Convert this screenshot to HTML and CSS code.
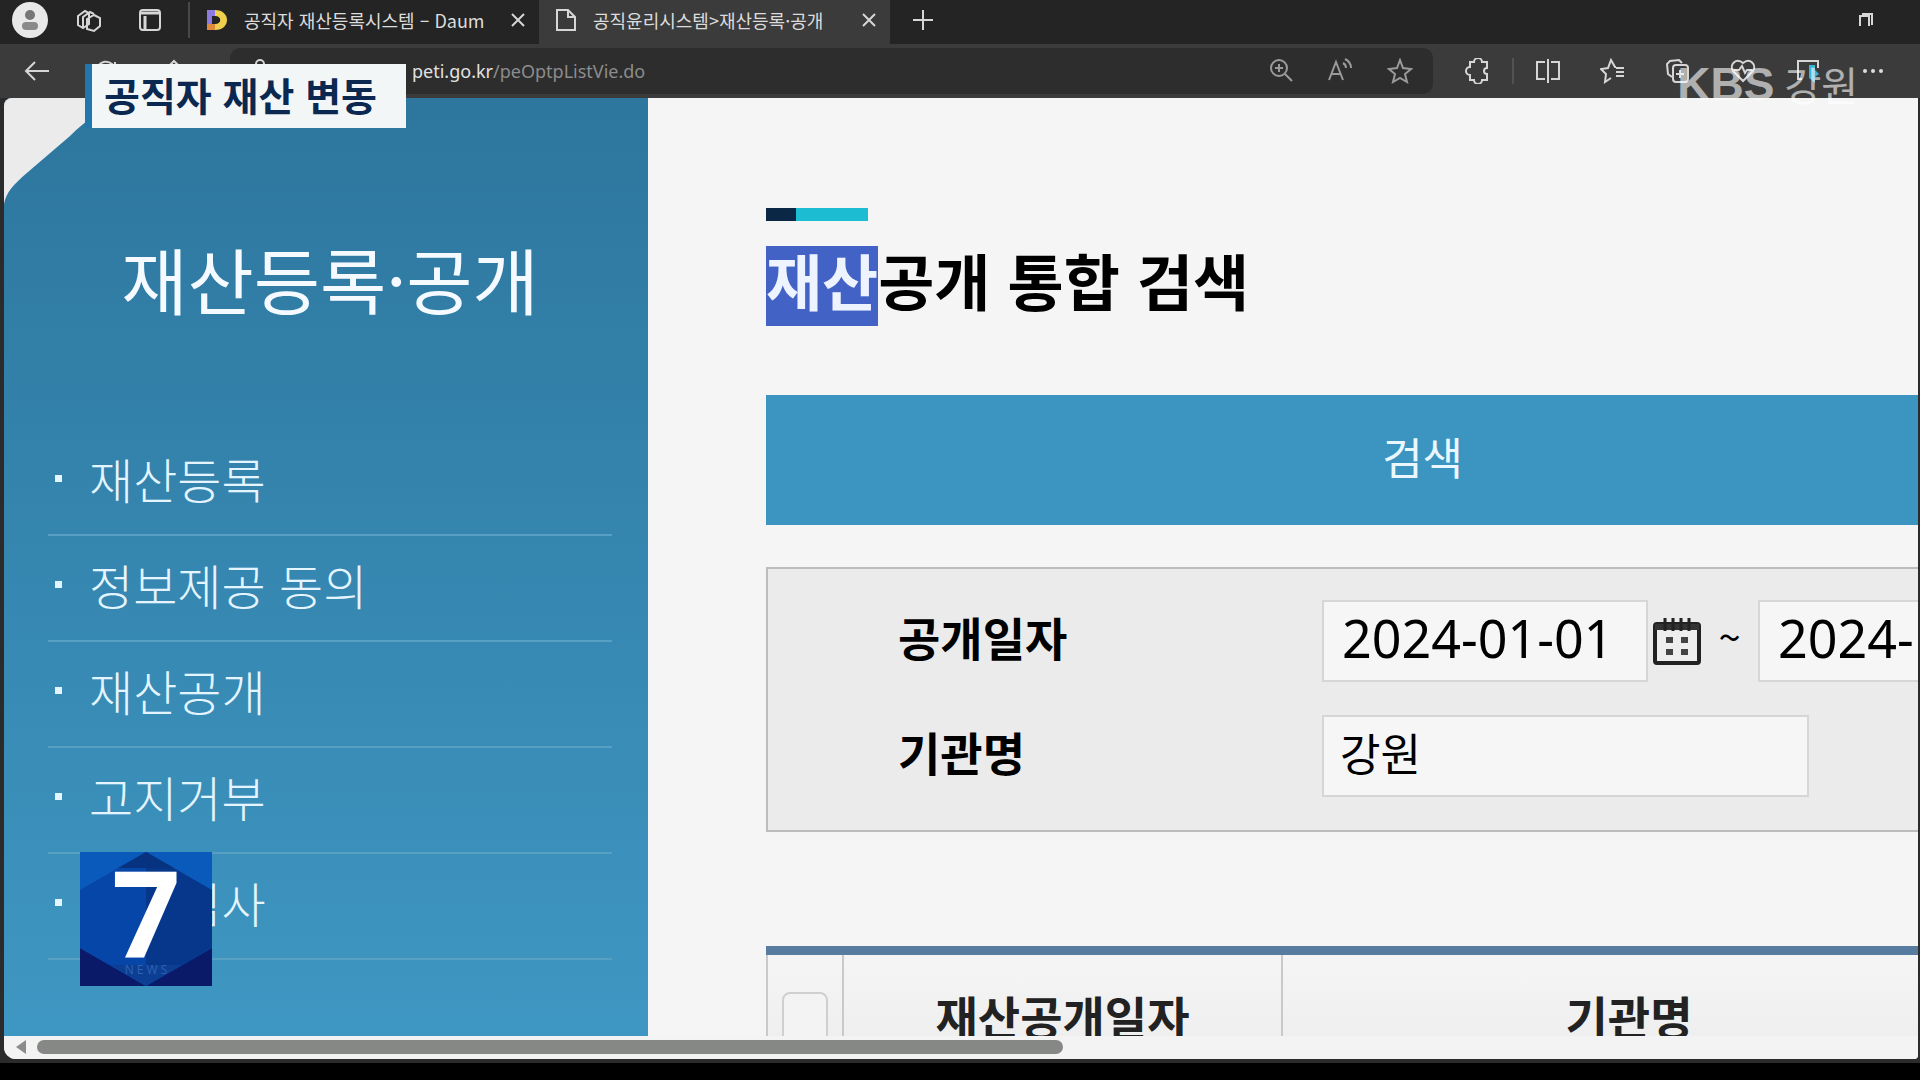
FILE: index.html
```html
<!DOCTYPE html>
<html lang="ko">
<head>
<meta charset="utf-8">
<title>재산공개 통합 검색</title>
<link rel="stylesheet" href="styles.css">
</head>
<body>
<div class="browser">
  <header class="tabs">
    <div class="tab-tools">
      <button class="icon-btn avatar" aria-label="프로필"><svg width="36" height="36" viewBox="0 0 36 36"><circle cx="18" cy="18" r="18" fill="#e9e9e9"/><circle cx="18" cy="13" r="5" fill="#777"/><rect x="10" y="20" width="16" height="8" rx="4" fill="#8a8a8a"/></svg></button>
      <button class="icon-btn" aria-label="작업 영역"><svg width="26" height="26" viewBox="0 0 26 26" class="line"><path d="M2 9l7-5 4 2v11l-6 4-5-3z M7 21V10l7-5 4 2 M11 22V12l7-4 6 3v8l-6 5z"/></svg></button>
      <button class="icon-btn" aria-label="탭 작업"><svg width="24" height="24" viewBox="0 0 24 24" class="line"><rect x="2" y="2" width="20" height="20" rx="3"/><path d="M2 5h20M7 8v14" stroke-width="3"/></svg></button>
    </div>
    <div class="tab">
      <svg width="22" height="22" viewBox="0 0 22 22"><path d="M1 1h8v20H1z" fill="#8d7be0"/><path d="M9 1c16 0 16 20 0 20v-6c7 0 7-8 0-8z" fill="#f0cf4d"/><path d="M1 15h8v6H1z" fill="#e08a3c"/><path d="M6 7h3v8H6z" fill="#242424"/></svg>
      <span class="tab-title">공직자 재산등록시스템 – Daum</span>
      <button class="icon-btn" aria-label="탭 닫기"><svg width="14" height="14" viewBox="0 0 14 14" class="line"><path d="M1 1l12 12M13 1L1 13"/></svg></button>
    </div>
    <div class="tab active">
      <svg width="22" height="24" viewBox="0 0 22 24" class="line"><path d="M2 2h11l7 7v13H2zM13 2v7h7"/></svg>
      <span class="tab-title">공직윤리시스템&gt;재산등록·공개</span>
      <button class="icon-btn" aria-label="탭 닫기"><svg width="14" height="14" viewBox="0 0 14 14" class="line"><path d="M1 1l12 12M13 1L1 13"/></svg></button>
    </div>
    <button class="icon-btn new-tab" aria-label="새 탭"><svg width="22" height="22" viewBox="0 0 22 22" class="line"><path d="M11 1v20M1 11h20"/></svg></button>
    <button class="icon-btn restore" aria-label="이전 크기로 복원"><svg width="16" height="18" viewBox="0 0 16 18" class="line"><path d="M2 15V5h9v10"/><path d="M4 3h10v11"/></svg></button>
  </header>

  <div class="toolbar">
    <button class="icon-btn back" aria-label="뒤로"><svg width="26" height="22" viewBox="0 0 26 22" class="line"><path d="M25 11H2M11 2l-9 9 9 9"/></svg></button>
    <button class="icon-btn" aria-label="새로 고침"><svg width="24" height="24" viewBox="0 0 24 24" class="line"><path d="M21 12a9 9 0 1 1-3-7l3 3V3"/></svg></button>
    <button class="icon-btn" aria-label="홈"><svg width="24" height="24" viewBox="0 0 24 24" class="line"><path d="M3 11l9-9 9 9v11h-6v-7H9v7H3z"/></svg></button>
    <div class="address">
      <svg width="20" height="24" viewBox="0 0 20 24" class="line"><rect x="2" y="9" width="16" height="13" rx="2"/><path d="M6 9V5a4 4 0 0 1 8 0v4"/></svg>
      <span class="url"><b>peti.go.kr</b>/peOptpListVie.do</span>
      <div class="address-actions">
        <button class="icon-btn" aria-label="확대"><svg width="24" height="24" viewBox="0 0 24 24" class="line"><circle cx="10" cy="10" r="8"/><path d="M16 16l7 7M6 10h8M10 6v8"/></svg></button>
        <button class="icon-btn" aria-label="소리내어 읽기"><svg width="26" height="24" viewBox="0 0 26 24" class="line"><path d="M2 22L9 4l7 18M4 16h10M16 5c2 1 3 3 3 5M18 1c4 2 6 5 6 9"/></svg></button>
        <button class="icon-btn" aria-label="즐겨찾기 추가"><svg width="26" height="26" viewBox="0 0 26 26" class="line"><path d="M13 2l3 8 8 1-6 5 2 8-7-4-7 4 2-8-6-5 8-1z"/></svg></button>
      </div>
    </div>
    <div class="extras">
      <button class="icon-btn" aria-label="확장"><svg width="26" height="26" viewBox="0 0 26 26" class="line"><path d="M9 4a4 4 0 0 1 8 0h5v6a3 3 0 0 0 0 6v6h-5a4 4 0 0 1-8 0H5v-5a4 4 0 0 1 0-8V4z"/></svg></button>
      <span class="divider"></span>
      <button class="icon-btn" aria-label="화면 분할"><svg width="26" height="26" viewBox="0 0 26 26" class="line"><path d="M10 4H2v17h8M16 4h8v17h-8M13 1v24"/></svg></button>
      <button class="icon-btn" aria-label="즐겨찾기"><svg width="26" height="26" viewBox="0 0 26 26" class="line"><path d="M16 9l-1 0-4-7-3 8-7 1 5 5-1 8 6-4M16 10h8M16 14h8M16 18h8"/></svg></button>
      <button class="icon-btn" aria-label="컬렉션"><svg width="26" height="26" viewBox="0 0 26 26" class="line"><path d="M7 19l-4-3-1-10 3-3 9-1 3 3"/><rect x="8" y="7" width="15" height="17" rx="3"/><path d="M15 12v8M11 16h8"/></svg></button>
      <button class="icon-btn" aria-label="브라우저 성능"><svg width="26" height="26" viewBox="0 0 26 26" class="line"><path d="M13 23L3 13C-1 7 6-1 13 5c7-6 14 2 10 8zM4 12h5l3-4 3 7 2-3h5"/></svg></button>
      <button class="icon-btn" aria-label="캡처"><svg width="26" height="26" viewBox="0 0 26 26" class="line"><path d="M7 21H3V3h20v7"/><path d="M14 7h6v5l4 4-4 3v6l-6-5z" fill="#36b5d8" stroke="none"/></svg></button>
      <button class="icon-btn" aria-label="설정 및 기타"><svg width="26" height="26" viewBox="0 0 26 26" fill="#ddd"><circle cx="5" cy="13" r="2"/><circle cx="13" cy="13" r="2"/><circle cx="21" cy="13" r="2"/></svg></button>
    </div>
  </div>

  <div class="page">
    <div class="content">
      <aside class="sidebar">
        <svg class="corner" width="122" height="106" viewBox="0 0 122 106" aria-hidden="true"><path d="M0 0h122C102 8 82 22 66 38L24 74C10 86 2 94 0 106z" fill="#ebebeb"/></svg>
        <h2 class="side-title">재산등록·공개</h2>
        <nav>
          <ul class="menu">
            <li><a href="#">재산등록</a></li>
            <li><a href="#">정보제공 동의</a></li>
            <li><a href="#">재산공개</a></li>
            <li><a href="#">고지거부</a></li>
            <li><a href="#">재산심사</a></li>
          </ul>
        </nav>
      </aside>
      <main class="main">
        <div class="sheet">
          <div class="accent"></div>
          <h1 class="title"><mark>재산</mark>공개 통합 검색</h1>
          <button class="search">검색</button>
          <form class="panel">
            <label for="from">공개일자</label>
            <div class="range">
              <input id="from" class="date" type="text" value="2024-01-01">
              <button type="button" class="calendar" aria-label="달력"><svg width="48" height="50" viewBox="0 0 48 50"><rect x="2" y="8" width="44" height="39" rx="2" fill="#eee" stroke="#222" stroke-width="4"/><path d="M2 8h44v6H2z" fill="#333"/><path d="M12 2v13M20 2v13M28 2v13M36 2v13" stroke="#222" stroke-width="3"/><path d="M13 21h7v6h-7zM28 21h7v6h-7zM13 33h7v6h-7zM28 33h7v6h-7z" fill="#444"/></svg></button>
              <span class="tilde">~</span>
              <input class="date" type="text" value="2024-" aria-label="종료일">
            </div>
            <label for="org">기관명</label>
            <input id="org" class="org" type="text" value="강원">
          </form>
          <table class="results">
            <thead>
              <tr>
                <th class="pick"><input type="checkbox" aria-label="전체 선택"></th>
                <th class="day">재산공개일자</th>
                <th class="agency">기관명</th>
                <th></th>
              </tr>
            </thead>
          </table>
        </div>
      </main>
    </div>
    <div class="scrollbar">
      <svg width="12" height="16" viewBox="0 0 12 16"><path d="M11 1v14L1 8z" fill="#8b8b8b"/></svg>
      <div class="thumb"></div>
    </div>
  </div>
</div>

<div class="caption">공직자 재산 변동</div>
<div class="station"><b>KBS</b><span>강원</span></div>
<div class="program">
  <svg width="132" height="134" viewBox="0 0 132 134" aria-hidden="true"><path d="M0 0h132v134H0z" fill="#0a5abb"/><path d="M0 96l66 38 66-38v38H0z" fill="#0a1a68"/><path d="M66 0L0 38v58l66 38z" fill="#0646a8"/><path d="M66 0l66 38v58l-66 38z" fill="#06378a"/><path d="M66 0L38 16h56z" fill="#07327f"/><path d="M30 113h72l-36 21z" fill="#0c3f94"/></svg>
  <span class="seven">7</span>
  <span class="news">N E W S</span>
</div>
</body>
</html>
```
FILE: styles.css
```css
* { box-sizing: border-box; }

body {
  margin: 0;
  height: 100vh;
  overflow: hidden;
  background: #000;
  font-family: "Noto Sans CJK KR", sans-serif;
}

button {
  border: 0;
  padding: 0;
  background: none;
  font-family: inherit;
}

.browser {
  height: 100%;
  display: flex;
  flex-direction: column;
  border-bottom: 17px solid #000;
  background: #2b2b2b;
}

.icon-btn { display: flex; flex: none; }

.line {
  fill: none;
  stroke: #d6d6d6;
  stroke-width: 2;
}

/* tab strip */
.tabs {
  height: 44px;
  flex: none;
  display: flex;
  align-items: center;
  padding: 0 46px 4px 12px;
  background: #242424;
}

.tab-tools {
  display: flex;
  align-items: center;
  gap: 28px;
  padding-right: 26px;
  border-right: 2px solid #484848;
}

.tab-tools .icon-btn:last-child { margin-left: 8px; }

.tab {
  width: 349px;
  height: 44px;
  display: flex;
  align-items: center;
  gap: 16px;
  padding: 0 14px 4px 16px;
  margin-bottom: -4px;
}

.tab.active {
  width: 351px;
  background: #3b3b3b;
}

.tab svg { flex: none; }

.tab-title {
  flex: 1;
  overflow: hidden;
  white-space: nowrap;
  font-size: 18px;
  line-height: 32px;
  color: #dcdcdc;
}

.new-tab { margin-left: 22px; }
.restore { margin-left: auto; }

/* toolbar */
.toolbar {
  height: 54px;
  flex: none;
  display: flex;
  align-items: center;
  gap: 44px;
  padding: 0 34px 0 24px;
  background: #3b3b3b;
}

.address {
  flex: 1;
  height: 46px;
  display: flex;
  align-items: center;
  padding: 0 20px 0 20px;
  border-radius: 10px;
  background: #2d2d2d;
}

.url {
  flex: 1;
  padding-left: 142px;
  font-family: "Noto Sans", sans-serif;
  font-size: 18px;
  color: #8c8c8c;
}

.url b { font-weight: 400; color: #e2e2e2; }

.address-actions { display: flex; gap: 34px; }
.address-actions .line { stroke: #9a9a9a; }

.extras {
  display: flex;
  align-items: center;
  gap: 39px;
  margin-left: -12px;
}

.divider {
  width: 2px;
  height: 26px;
  margin: 0 -18px;
  background: #525252;
}

/* page viewport */
.page {
  flex: 1;
  min-height: 0;
  display: flex;
  flex-direction: column;
  margin: 0 2px 4px 4px;
  border-radius: 8px 0 4px 12px;
  overflow: hidden;
  background: #f5f5f5;
}

.content {
  flex: 1;
  min-height: 0;
  display: flex;
  overflow: hidden;
}

.sidebar {
  flex: 0 0 644px;
  position: relative;
  padding: 132px 36px 0 44px;
  background: linear-gradient(#2d769e, #3e97c2);
}

.corner {
  position: absolute;
  top: 0;
  left: 0;
}

.side-title {
  margin: 0 0 104px;
  text-align: center;
  font-size: 72px;
  line-height: 96px;
  font-weight: 400;
  color: #f4faff;
}

.menu {
  margin: 0;
  padding: 0;
  list-style: none;
}

.menu li {
  height: 106px;
  border-bottom: 2px solid #589fc4;
}

.menu a {
  display: flex;
  align-items: center;
  gap: 27px;
  padding-left: 7px;
  font-size: 48px;
  line-height: 96px;
  font-weight: 300;
  color: #e4f5ff;
  text-decoration: none;
}

.menu a::before {
  content: "";
  width: 7px;
  height: 7px;
  background: #e4f5ff;
}

.main {
  flex: 1;
  min-width: 0;
  overflow: hidden;
  padding: 110px 0 0 118px;
}

/* the zoomed sheet runs on past the right edge of the viewport */
.sheet { width: 114%; }

.accent {
  width: 102px;
  height: 13px;
  background: linear-gradient(90deg, #0a2745 30px, #1cbcd2 30px);
}

.title {
  margin: 25px 0 69px;
  font-size: 61px;
  line-height: 68px;
  font-weight: 700;
  color: #000;
}

.title mark {
  display: inline-block;
  padding-bottom: 12px;
  background: #4262c6;
  color: #eef4ff;
}

.search {
  display: block;
  width: 100%;
  height: 130px;
  padding-bottom: 8px;
  background: #3c95c0;
  font-size: 44px;
  color: #eaf7ff;
}

.panel {
  display: grid;
  grid-template-columns: 424px 1fr;
  gap: 33px 0;
  align-items: center;
  margin-top: 42px;
  padding: 31px 0 33px 130px;
  border: 2px solid #bdbdbd;
  background: #ebebeb;
}

.panel label {
  padding-bottom: 10px;
  font-size: 46px;
  line-height: 60px;
  font-weight: 700;
}

.range { display: flex; align-items: center; }

.date,
.org {
  height: 82px;
  border: 2px solid #d6d6d6;
  background: #f6f6f6;
  color: #000;
}

.date {
  flex: none;
  width: 326px;
  padding: 0 18px 8px;
  font-family: "Noto Sans", sans-serif;
  font-size: 52px;
}

.org {
  width: 487px;
  padding: 0 16px 8px;
  font-family: inherit;
  font-size: 44px;
}

.calendar { display: flex; margin-left: 5px; }

.tilde {
  width: 57px;
  padding-bottom: 10px;
  text-align: center;
  font-size: 40px;
}

.results {
  width: 100%;
  margin-top: 114px;
  table-layout: fixed;
  border-collapse: separate;
  border-spacing: 0;
  border-top: 9px solid #587c9f;
}

.results th {
  height: 130px;
  padding: 0 0 10px;
  border-left: 2px solid #c9c9c9;
  background: linear-gradient(#f5f5f5, #ebebeb);
  font-size: 46px;
  line-height: 60px;
  font-weight: 700;
  color: #222;
}

.pick { width: 76px; }
.day { width: 439px; }
.agency { width: 694px; }

.pick input {
  appearance: none;
  display: block;
  width: 46px;
  height: 50px;
  margin: 4px auto 0;
  border: 2px solid #cfcfcf;
  border-radius: 8px;
  background: #f3f3f3;
}

.scrollbar {
  flex: none;
  height: 23px;
  display: flex;
  align-items: center;
  gap: 10px;
  padding: 0 3px 2px 11px;
  background: #f3f3f3;
}

.thumb {
  width: 54%;
  height: 14px;
  border-radius: 7px;
  background: #868886;
}

/* broadcast overlays */
.caption {
  position: absolute;
  top: 64px;
  left: 85px;
  padding: 0 29px 4px 12px;
  border-left: 7px solid #2176ac;
  background: #f3f6f7;
  font-size: 39px;
  line-height: 60px;
  font-weight: 700;
  color: #0a2850;
}

.station {
  position: absolute;
  top: 60px;
  right: 62px;
  display: flex;
  align-items: center;
  gap: 10px;
  line-height: 48px;
  font-size: 40px;
  font-weight: 400;
  color: #fff;
  opacity: 0.6;
}

.station b {
  font-family: "Liberation Sans", sans-serif;
  font-size: 46px;
  font-weight: 700;
}

.program {
  position: absolute;
  left: 80px;
  top: 852px;
  width: 132px;
  height: 134px;
}

.seven,
.news {
  position: absolute;
  left: 0;
  width: 100%;
  text-align: center;
}

.seven {
  top: 0;
  font-family: "Open Sans", sans-serif;
  font-size: 120px;
  line-height: 120px;
  font-weight: 700;
  color: #fff;
}

.news {
  top: 110px;
  font-family: "Open Sans", sans-serif;
  font-size: 12px;
  line-height: 16px;
  color: #2f62b4;
}
```
